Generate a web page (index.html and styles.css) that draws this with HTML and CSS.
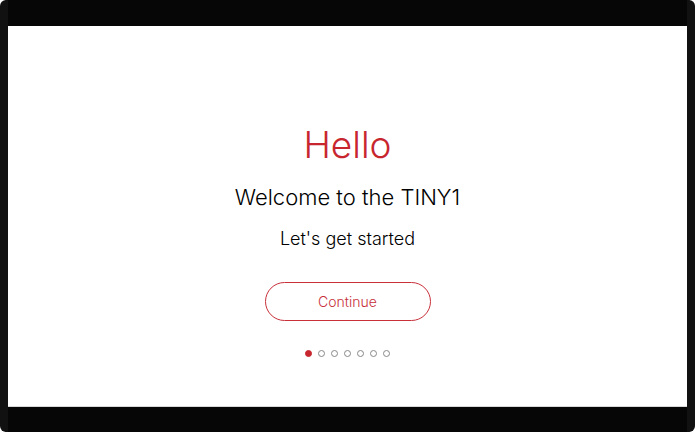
FILE: index.html
```html
<!DOCTYPE html>
<html lang="en">
<head>
<meta charset="UTF-8">
<meta name="viewport" content="width=device-width, initial-scale=1.0">
<title>TINY1 Setup</title>
<link rel="stylesheet" href="styles.css">
</head>
<body>

<div class="device">
  <div class="screen">
    <h1 class="hello">Hello</h1>
    <p class="welcome">Welcome to the TINY1</p>
    <p class="subtitle">Let's get started</p>

    <button class="continue-btn">Continue</button>

    <!-- onboarding steps -->
    <div class="dots">
      <span class="dot active"></span>
      <span class="dot"></span>
      <span class="dot"></span>
      <span class="dot"></span>
      <span class="dot"></span>
      <span class="dot"></span>
      <span class="dot"></span>
    </div>
  </div>
</div>

</body>
</html>
```

FILE: styles.css
```css
body {
  margin: 0;
  background-color: #fff;
  font-family: Inter, Lato, sans-serif;
  font-weight: 300;
  color: #000;
}
.device {
  width: 695px;
  height: 432px;
  box-sizing: border-box;
  padding: 26px 0 25px 0;
  background-color: #060606;
  border-left: 8px solid #111;
  border-right: 8px solid #111;
  border-radius: 6px;
}
.screen {
  height: 100%;
  background-color: #fff;
  border-bottom: 1px solid #d8d8d8;
  box-sizing: border-box;
  display: flex;
  flex-direction: column;
  align-items: center;
  padding-top: 97px;
}
.hello {
  margin: 0;
  font-size: 37px;
  font-weight: 300;
  line-height: 44px;
  color: #c8262f;
}
.welcome {
  margin: 16px 0 0 0;
  font-size: 22px;
  line-height: 28px;
}
.subtitle {
  margin: 16px 0 0 0;
  font-size: 18px;
  line-height: 24px;
}
.continue-btn {
  margin-top: 31px;
  width: 166px;
  height: 39px;
  border: 1.5px solid #c8303a;
  border-radius: 20px;
  background-color: #fff;
  color: #c8303a;
  font-family: Inter, Lato, sans-serif;
  font-weight: 300;
  font-size: 14px;
  cursor: pointer;
}
.dots {
  display: flex;
  gap: 6px;
  margin-top: 29px;
}
.dot {
  width: 7px;
  height: 7px;
  box-sizing: border-box;
  border: 1px solid #888;
  border-radius: 50%;
}
.dot.active {
  background-color: #c8262f;
  border-color: #c8262f;
}
```
